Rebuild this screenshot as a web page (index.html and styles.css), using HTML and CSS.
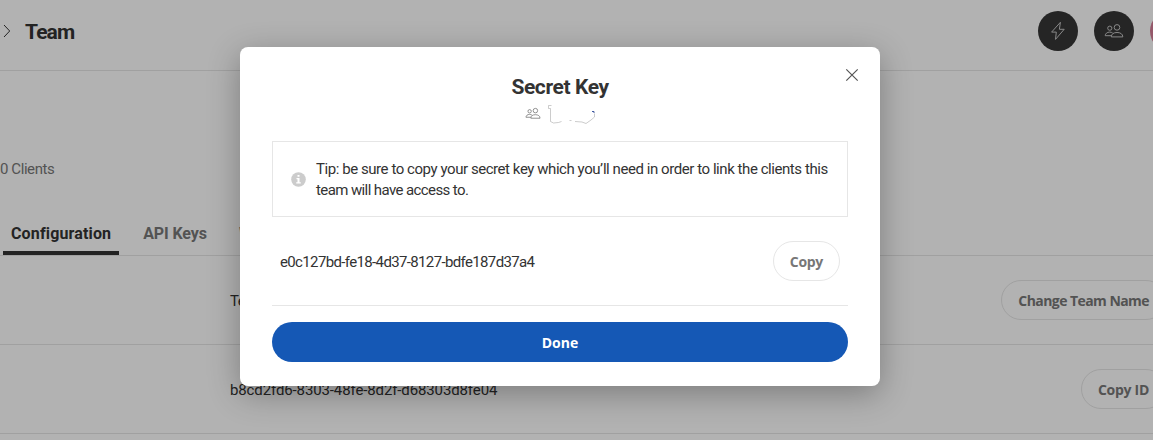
FILE: index.html
```html
<!DOCTYPE html>
<html lang="en">
<head>
<meta charset="utf-8">
<title>Team</title>
<link rel="stylesheet" href="styles.css">
</head>
<body>
<svg class="symbols" aria-hidden="true">
  <symbol id="people" viewBox="0 0 20 16">
    <g fill="none" stroke="currentColor">
      <circle cx="5.8" cy="5.2" r="2.1"/>
      <circle cx="13" cy="4.4" r="2.8"/>
      <path d="M7.4 12.7H1.2c0-2.1 2-3.6 4.4-3.6 1.2 0 2.3.3 3.1 1"/>
      <path d="M7.3 13.9c0-2.9 2.3-4.4 5.7-4.4s5.8 1.5 5.8 4.4z"/>
    </g>
  </symbol>
</svg>
<div class="page">
  <header class="header">
    <svg class="chevron" viewBox="0 0 8 14"><path d="M1 1l5.7 6L1 13"/></svg>
    <h1 class="title">Team</h1>
    <div class="actions">
      <span class="round"><svg class="bolt" viewBox="0 0 16 20"><path d="M10.4 1.3L1.6 11.1h4.7L5.5 18.4l8.7-10.1H9.4z"/></svg></span>
      <span class="round"><svg class="people"><use href="#people"/></svg></span>
      <span class="round avatar"></span>
    </div>
  </header>
  <div class="clients"><span class="clients-text">0 Clients</span></div>
  <nav class="tabs">
    <span class="tab active"><span class="tab-config">Configuration</span></span>
    <span class="tab"><span class="tab-keys">API Keys</span></span>
    <span class="tab">Webhooks</span>
  </nav>
  <div class="row"><span class="team-name">Team Name</span><button class="pill"><span class="pill-change">Change Team Name</span></button></div>
  <div class="row"><span class="team-id">b8cd2fd6-8303-48fe-8d2f-d68303d8fe04</span><button class="pill"><span class="pill-id">Copy ID</span></button></div>
</div>
<div class="overlay">
  <section class="modal">
    <svg class="close" viewBox="0 0 14 14"><path d="M1.3 1.3l11.4 11.4M12.7 1.3L1.3 12.7"/></svg>
    <h2 class="modal-title">Secret Key</h2>
    <div class="owner">
      <svg class="owner-icon" viewBox="0 0 20 16"><use href="#people" width="20" height="16"/></svg>
      <svg class="scribble" viewBox="0 0 52 20">
        <path d="M4.500 1.500H1.500v3H3.500v13l3 1.500 5-.5 3-1M22.500 16.500h2M28 17.500l7 .5 4 1.500 5-3.500 3.500-3V9.500"/>
        <path class="ink" d="M45 7.500h2v1.500"/>
      </svg>
    </div>
    <div class="tip">
      <svg class="info" viewBox="0 0 15 15"><circle cx="7.500" cy="7.500" r="7.300"/><path d="M6.500 3h2v1.700h-2zM5.500 6h3v4.200h1.300v1.300H5.200v-1.300h1.300V7.200h-1z"/></svg>
      <p class="tip-text"><span class="tip-first">Tip: be sure to copy your secret key which you’ll need in order to link the clients this</span><br><span class="tip-second">team will have access to.</span></p>
    </div>
    <div class="key-row"><span class="secret">e0c127bd-fe18-4d37-8127-bdfe187d37a4</span><button class="pill"><span class="pill-copy">Copy</span></button></div>
    <button class="done"><span class="done-text">Done</span></button>
  </section>
</div>
</body>
</html>
```
FILE: styles.css
```css
* { box-sizing: border-box; }
body { margin: 0; height: 440px; overflow: hidden; background: #fff; color: #333; font: 15px/21px Roboto, "Liberation Sans", sans-serif; }
h1, h2, p { margin: 0; }
button { font-family: "Open Sans", "Noto Sans", sans-serif; font-size: 14px; font-weight: 700; line-height: 20px; }
.symbols { position: absolute; width: 0; height: 0; }
.page { width: 1166px; height: 440px; overflow: hidden; }
.header { height: 71px; border-bottom: 1px solid #e6e6e6; display: flex; align-items: center; padding: 0 0 8px 3px; }
.chevron { width: 8px; height: 14px; fill: none; stroke: #333; }
.title { margin-left: 14px; padding-top: 2px; font-size: 21px; line-height: 26px; font-weight: 700; letter-spacing: -.9px; }
.actions { margin-left: auto; display: flex; gap: 16px; margin-right: -24px; }
.round { width: 40px; height: 40px; border-radius: 50%; background: #363636; color: #c4c4c4; display: flex; align-items: center; justify-content: center; }
.avatar { background: #d67f98; }
.bolt { width: 16px; height: 20px; fill: none; stroke: currentColor; }
.people { width: 20px; height: 16px; }
.clients { height: 140px; padding-top: 88px; color: #777; }
.clients-text { letter-spacing: -.42px; }
.tabs { height: 45px; border-bottom: 1px solid #e6e6e6; display: flex; gap: 16px; padding-left: 3px; font-size: 16px; font-weight: 700; color: #777; }
.tab { height: 44px; padding: 12px 8px 0; }
.active { color: #333; border-bottom: 4px solid #333; }
.tab-config { letter-spacing: .14px; }
.tab-keys { letter-spacing: -.1px; }
.row { height: 89px; border-bottom: 1px solid #e6e6e6; padding-left: 230px; display: flex; align-items: center; justify-content: space-between; }
.team-name { padding-top: 2px; letter-spacing: -.6px; }
.team-id { padding-top: 2px; letter-spacing: -.12px; }
.pill { height: 40px; padding: 2px 16px 0; border: 1px solid #e6e6e6; border-radius: 20px; background: transparent; color: #777; white-space: nowrap; }
.pill-change { letter-spacing: -.56px; }
.pill-id { letter-spacing: -.28px; }
.pill-copy { letter-spacing: -.3px; }
.overlay { position: absolute; inset: 0; overflow: hidden; background: rgba(0, 0, 0, .3); padding: 47px 0 0 240px; }
.modal { position: relative; width: 640px; height: 339px; border-radius: 8px; background: #fff; padding: 27px 32px 24px; box-shadow: 0 8px 32px rgba(0, 0, 0, .3); display: flex; flex-direction: column; }
.close { position: absolute; top: 21px; right: 21px; width: 14px; height: 14px; fill: none; stroke: #555; stroke-width: 1.2; }
.modal-title { align-self: center; font-size: 21px; line-height: 26px; font-weight: 700; letter-spacing: -.4px; }
.owner { display: flex; align-items: center; height: 24px; padding: 2px 0 0 253px; gap: 6px; }
.owner-icon { width: 16px; height: 13px; color: #777; }
.scribble { width: 52px; height: 20px; margin-top: 2px; fill: none; stroke: #aaa; stroke-width: .6; }
.ink { stroke: #4059a0; stroke-width: 1; }
.tip { height: 76px; margin-top: 17px; border: 1px solid #e6e6e6; display: flex; align-items: center; gap: 10px; padding-left: 18px; }
.info { width: 15px; height: 15px; flex: none; fill: #ccc; }
.info path { fill: #fff; }
.tip-text { padding-top: 2px; white-space: nowrap; }
.tip-first { letter-spacing: -.44px; }
.tip-second { letter-spacing: -.6px; }
.key-row { height: 89px; border-bottom: 1px solid #e6e6e6; padding: 0 8px; display: flex; align-items: center; justify-content: space-between; }
.secret { padding-top: 2px; letter-spacing: -.64px; }
.done { margin-top: 16px; height: 40px; border: 0; border-radius: 20px; padding: 2px 0 0; background: #1558b5; color: #fff; }
```
